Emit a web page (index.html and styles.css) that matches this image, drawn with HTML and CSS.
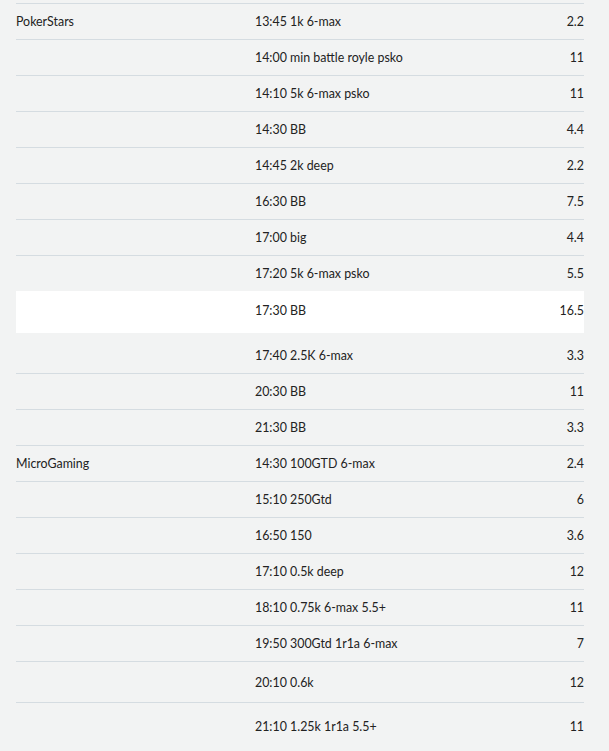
FILE: index.html
```html
<!DOCTYPE html>
<html lang="en">
<head>
<meta charset="utf-8">
<title>Schedule</title>
<link rel="stylesheet" href="styles.css">
</head>
<body>
<div class="schedule">
  <div class="row"><span class="room">PokerStars</span><span class="name">13:45 1k 6-max</span><span class="val">2.2</span></div>
  <div class="row"><span class="room"></span><span class="name">14:00 min battle royle psko</span><span class="val">11</span></div>
  <div class="row"><span class="room"></span><span class="name">14:10 5k 6-max psko</span><span class="val">11</span></div>
  <div class="row"><span class="room"></span><span class="name">14:30 BB</span><span class="val">4.4</span></div>
  <div class="row"><span class="room"></span><span class="name">14:45 2k deep</span><span class="val">2.2</span></div>
  <div class="row"><span class="room"></span><span class="name">16:30 BB</span><span class="val">7.5</span></div>
  <div class="row"><span class="room"></span><span class="name">17:00 big</span><span class="val">4.4</span></div>
  <div class="row row-plain"><span class="room"></span><span class="name">17:20 5k 6-max psko</span><span class="val">5.5</span></div>
  <div class="row row-active"><span class="room"></span><span class="name">17:30 BB</span><span class="val">16.5</span></div>
  <div class="row row-after"><span class="room"></span><span class="name">17:40 2.5K 6-max</span><span class="val">3.3</span></div>
  <div class="row"><span class="room"></span><span class="name">20:30 BB</span><span class="val">11</span></div>
  <div class="row"><span class="room"></span><span class="name">21:30 BB</span><span class="val">3.3</span></div>
  <div class="row"><span class="room">MicroGaming</span><span class="name">14:30 100GTD 6-max</span><span class="val">2.4</span></div>
  <div class="row"><span class="room"></span><span class="name">15:10 250Gtd</span><span class="val">6</span></div>
  <div class="row"><span class="room"></span><span class="name">16:50 150</span><span class="val">3.6</span></div>
  <div class="row"><span class="room"></span><span class="name">17:10 0.5k deep</span><span class="val">12</span></div>
  <div class="row"><span class="room"></span><span class="name">18:10 0.75k 6-max 5.5+</span><span class="val">11</span></div>
  <div class="row"><span class="room"></span><span class="name">19:50 300Gtd 1r1a 6-max</span><span class="val">7</span></div>
  <div class="row row-tall"><span class="room"></span><span class="name">20:10 0.6k</span><span class="val">12</span></div>
  <div class="row row-last"><span class="room"></span><span class="name">21:10 1.25k 1r1a 5.5+</span><span class="val">11</span></div>
</div>
</body>
</html>
```
FILE: styles.css
```css
html, body {
  margin: 0;
  padding: 0;
  background: #f2f3f3;
}
body {
  font-family: Lato, "Noto Sans", sans-serif;
  font-size: 12.4px;
  color: #222;
}
.schedule {
  margin: 3px 25px 0 16px;
  border-top: 1px solid #d5dce1;
}
.row {
  display: grid;
  grid-template-columns: 239px 1fr auto;
  align-items: center;
  height: 35px;
  border-bottom: 1px solid #d5dce1;
}
.row-plain {
  border-bottom: none;
}
.row-active {
  background: #ffffff;
  height: 42px;
  padding-bottom: 4px;
  box-sizing: border-box;
  border-bottom: none;
}
.row-after {
  height: 41px;
  padding-top: 4px;
  box-sizing: border-box;
}
.row-tall {
  height: 40px;
}
.row-last {
  height: 46px;
  border-bottom: none;
}
.val {
  text-align: right;
}
```
